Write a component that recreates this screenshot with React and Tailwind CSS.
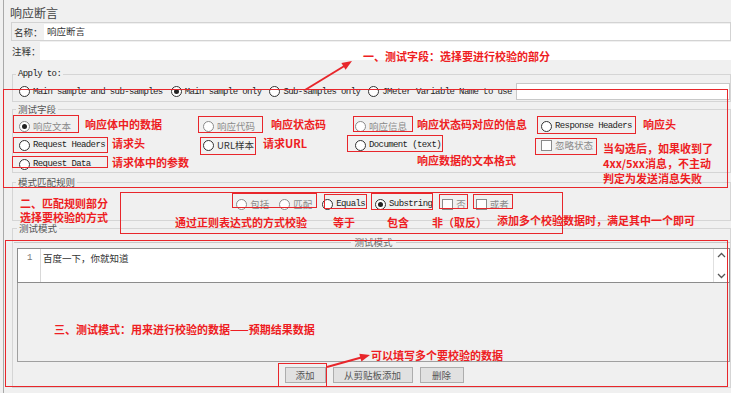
import React from "react";

function Circle({ checked, dim }) {
  return (
    <span
      className={`flex h-[11px] w-[11px] shrink-0 items-center justify-center rounded-full border bg-white ${
        dim ? "border-[#8a8a8a]" : "border-[#333]"
      }`}
    >
      {checked ? <span className="h-[5px] w-[5px] rounded-full bg-[#222]" /> : null}
    </span>
  );
}

function Square({ dim }) {
  return (
    <span
      className={`h-[11px] w-[11px] shrink-0 border bg-white ${
        dim ? "border-[#8a8a8a]" : "border-[#333]"
      }`}
    />
  );
}

function Label({ children, latin, dim }) {
  if (latin) {
    return (
      <span
        className={`whitespace-nowrap font-['Liberation_Mono',monospace] text-[9px] leading-[14px] tracking-[-0.6px] ${
          dim ? "text-[#8a8a8a]" : "text-[#222]"
        }`}
      >
        {children}
      </span>
    );
  }
  return (
    <span
      className={`whitespace-nowrap font-['Noto_Sans_CJK_SC',sans-serif] text-[9.5px] leading-[14px] ${
        dim ? "text-[#8a8a8a]" : "text-[#333]"
      }`}
    >
      {children}
    </span>
  );
}

function Radio({ label, checked, dim, latin }) {
  return (
    <div className="flex h-[14px] items-center gap-[3px]">
      <Circle checked={checked} dim={dim} />
      <Label latin={latin} dim={dim}>
        {label}
      </Label>
    </div>
  );
}

function Check({ label, dim, latin }) {
  return (
    <div className="flex h-[14px] items-center gap-[3px]">
      <Square dim={dim} />
      <Label latin={latin} dim={dim}>
        {label}
      </Label>
    </div>
  );
}

const boxes = [
  [3, 89, 725, 99],
  [13, 115, 66, 18],
  [13, 137, 95, 16],
  [12, 156, 96, 12],
  [198, 116, 65, 17],
  [200, 137, 56, 18],
  [353, 116, 60, 16],
  [347, 135, 96, 17],
  [537, 116, 99, 18],
  [535, 138, 62, 17],
  [120, 192, 443, 42],
  [232, 193, 85, 15],
  [324, 194, 43, 15],
  [371, 193, 62, 17],
  [439, 194, 29, 15],
  [473, 194, 40, 15],
  [5, 240, 723, 147],
  [278, 363, 49, 24],
];

const notes = [
  ["一、测试字段：选择要进行校验的部分", 363, 56],
  ["响应体中的数据", 85, 124],
  ["请求头", 112, 143],
  ["请求体中的参数", 112, 162],
  ["响应状态码", 271, 124],
  ["请求URL", 263, 143],
  ["响应状态码对应的信息", 417, 124],
  ["响应数据的文本格式", 417, 160],
  ["响应头", 643, 124],
  ["当勾选后，如果收到了", 603, 148],
  ["4xx/5xx消息，不主动", 603, 163],
  ["判定为发送消息失败", 603, 178],
  ["二、匹配规则部分", 20, 203],
  ["选择要校验的方式", 20, 217],
  ["通过正则表达式的方式校验", 175, 222],
  ["等于", 333, 222],
  ["包含", 387, 222],
  ["非（取反）", 432, 222],
  ["添加多个校验数据时，满足其中一个即可", 497, 220],
  ["三、测试模式：用来进行校验的数据——预期结果数据", 54, 329],
  ["可以填写多个要校验的数据", 371, 355],
];

export default function App() {
  return (
    <div className="relative h-[393px] w-[731px] overflow-hidden bg-[#f0f0f0] font-['Noto_Sans_CJK_SC',sans-serif]">
      <div className="ml-[3px] flex h-full flex-col border-l border-[#a9a9a9]">
        {/* title */}
        <div className="h-[23px] pl-[6px] pt-[6px] text-[12px] leading-[14px] text-[#444]">响应断言</div>

        {/* name row */}
        <div className="ml-[7px] flex h-[21px] items-center border border-[#d3d3d3]">
          <span className="w-[32px] shrink-0 whitespace-nowrap pl-[2px] text-[9.5px] leading-[14px] text-[#333]">名称：</span>
          <div className="flex h-[16px] flex-1 items-center bg-white pl-[3px] text-[9.5px] text-[#333]">响应断言</div>
        </div>

        {/* comment row */}
        <div className="ml-[8px] mt-[1px] flex h-[19px] items-center">
          <span className="w-[28px] shrink-0 whitespace-nowrap text-[9.5px] leading-[14px] text-[#333]">注释：</span>
          <div className="h-[18px] flex-1 bg-white" />
        </div>

        {/* Apply to */}
        <fieldset className="ml-[8px] mt-[8px] border border-[#d5d5d5] pb-[1px] pt-[3px]">
          <legend className="ml-[3px] px-[2px] font-['Liberation_Mono',monospace] text-[9px] leading-[12px] tracking-[-0.6px] text-[#222]">
            Apply to:
          </legend>
          <div className="flex items-center gap-[8px] pl-[6px]">
            <Radio latin label="Main sample and sub-samples" />
            <Radio latin checked label="Main sample only" />
            <Radio latin label="Sub-samples only" />
            <Radio latin label="JMeter Variable Name to use" />
            <div className="ml-[-4px] h-[17px] flex-1 border border-[#c8c8c8] bg-white" />
          </div>
        </fieldset>

        {/* 测试字段 */}
        <fieldset className="ml-[8px] mt-[1px] border border-[#d5d5d5] pb-[1px] pt-[4px]">
          <legend className="ml-[3px] px-[2px] text-[9.5px] leading-[12px] text-[#555]">测试字段</legend>
          <div className="grid grid-cols-[184px_152px_186px_1fr] gap-y-[5px] pl-[6px]">
            <Radio checked dim label="响应文本" />
            <Radio dim label="响应代码" />
            <Radio dim label="响应信息" />
            <Radio latin label="Response Headers" />
            <Radio latin label="Request Headers" />
            <Radio label="URL样本" />
            <Radio latin label="Document (text)" />
            <Check dim label="忽略状态" />
            <Radio latin label="Request Data" />
          </div>
        </fieldset>

        {/* 模式匹配规则 */}
        <fieldset className="ml-[8px] mt-[3px] border border-[#d5d5d5] pb-[9px] pt-[9px]">
          <legend className="ml-[3px] px-[2px] text-[9.5px] leading-[12px] text-[#555]">模式匹配规则</legend>
          <div className="flex items-center justify-center gap-[10px] pl-[2px]">
            <Radio dim label="包括" />
            <Radio dim label="匹配" />
            <Radio latin label="Equals" />
            <Radio latin checked label="Substring" />
            <Check dim label="否" />
            <Check dim label="或者" />
          </div>
        </fieldset>

        {/* 测试模式 */}
        <fieldset className="ml-[8px] mt-[1px] flex flex-1 flex-col border border-[#d5d5d5] pb-[4px] pl-[1px]">
          <legend className="ml-[3px] px-[2px] text-[9.5px] leading-[12px] text-[#555]">测试模式</legend>
          <fieldset className="mt-[2px] border-t border-[#c8c8c8] pl-[3px]">
            <legend className="mx-auto px-[3px] text-[9.5px] leading-[12px] text-[#666]">测试模式</legend>
            <div className="flex h-[35px] border border-[#8c8c8c] bg-white">
              <div className="w-[23px] border-r border-[#d8d8d8] pl-[9px] pt-[2px] font-['Liberation_Mono',monospace] text-[9px] leading-[14px] text-[#777]">
                1
              </div>
              <div className="flex-1 pl-[2px] pt-[2px] text-[9.5px] leading-[14px] text-[#333]">百度一下，你就知道</div>
              <div className="flex w-[16px] flex-col items-center justify-between border-l border-[#e0e0e0] py-[3px]">
                <svg width="9" height="6" viewBox="0 0 9 6">
                  <path d="M1 5 L4.5 1.5 L8 5" fill="none" stroke="#555" strokeWidth="1.3" />
                </svg>
                <svg width="9" height="6" viewBox="0 0 9 6">
                  <path d="M1 1 L4.5 4.5 L8 1" fill="none" stroke="#555" strokeWidth="1.3" />
                </svg>
              </div>
            </div>
            <div className="h-[79px] border-x border-b border-[#a0a0a0] bg-[#f0f0f0]" />
          </fieldset>
          <div className="mt-[5px] flex justify-center gap-[7px] pl-[4px]">
            <div className="flex h-[16px] w-[41px] items-center justify-center border border-[#adadad] bg-[#e1e1e1] text-[9.5px] text-[#555]">添加</div>
            <div className="flex h-[16px] w-[80px] items-center justify-center border border-[#adadad] bg-[#e1e1e1] text-[9.5px] text-[#555]">从剪贴板添加</div>
            <div className="flex h-[16px] w-[44px] items-center justify-center border border-[#adadad] bg-[#e1e1e1] text-[9.5px] text-[#555]">删除</div>
          </div>
        </fieldset>
        <div className="h-[5px]" />
      </div>

      {/* annotations */}
      {boxes.map(([x, y, w, h], i) => (
        <div
          key={i}
          className="pointer-events-none absolute border-[1.5px] border-[#e8262b]"
          style={{ left: x, top: y, width: w, height: h }}
        />
      ))}
      {notes.map(([t, x, y], i) => (
        <div
          key={i}
          className="pointer-events-none absolute whitespace-nowrap font-['Noto_Sans_CJK_SC',sans-serif] text-[11px] font-bold leading-[14px] text-[#ee1d23]"
          style={{ left: x, top: y - 7 }}
        >
          {t}
        </div>
      ))}
      <svg className="pointer-events-none absolute left-0 top-0" width="731" height="393">
        <line x1="305" y1="90" x2="346" y2="65" stroke="#e8262b" strokeWidth="2" />
        <polygon points="352,61 345.6,69.7 341.4,62.9" fill="#e8262b" />
        <line x1="327" y1="367" x2="363" y2="357" stroke="#e8262b" strokeWidth="2" />
        <polygon points="370,355 361.4,361.5 359.3,353.8" fill="#e8262b" />
      </svg>
    </div>
  );
}
